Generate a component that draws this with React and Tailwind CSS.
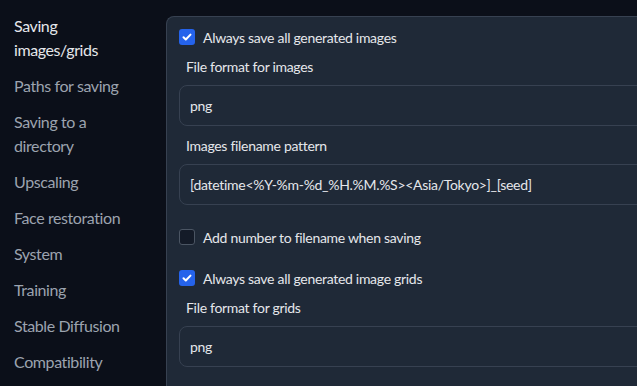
import React from 'react';

const navItems = [
  { label: 'Saving images/grids', active: true },
  { label: 'Paths for saving' },
  { label: 'Saving to a directory' },
  { label: 'Upscaling' },
  { label: 'Face restoration' },
  { label: 'System' },
  { label: 'Training' },
  { label: 'Stable Diffusion' },
  { label: 'Compatibility' },
];

function Checkbox({ checked, label, className = '' }) {
  return (
    <label className={`flex h-6 items-center ${className}`}>
      {checked ? (
        <span className="flex h-4 w-4 items-center justify-center rounded-[3px] bg-[#2563eb]">
          <svg viewBox="0 0 16 16" className="h-4 w-4" fill="none">
            <path
              d="M4.5 8.2l2.3 2.3 4.7-4.9"
              stroke="white"
              strokeWidth="2"
              strokeLinecap="round"
              strokeLinejoin="round"
            />
          </svg>
        </span>
      ) : (
        <span className="h-4 w-4 rounded-[3px] border border-[#4b5563] bg-[#141b28]" />
      )}
      <span className="ml-2 text-[14px] tracking-[-0.3px] text-[#e5e7eb]">{label}</span>
    </label>
  );
}

function Field({ label, value, className = '' }) {
  return (
    <div className={className}>
      <div className="h-5 pl-[7px] text-[14px] leading-5 tracking-[-0.3px] text-[#e5e7eb]">
        {label}
      </div>
      <div className="mt-2 flex h-[41px] w-[620px] items-center rounded-lg border border-[#374151] bg-[#1f2937] px-[10px] text-[14px] tracking-[-0.3px] text-[#e5e7eb]">
        {value}
      </div>
    </div>
  );
}

export default function App() {
  return (
    <div
      className="flex h-[386px] w-[637px] overflow-hidden bg-[#0b0f19]"
      style={{ fontFamily: 'Lato, "Noto Sans", sans-serif' }}
    >
      <nav className="w-[166px] shrink-0 pt-2 pl-[14px]">
        {navItems.map((item) => (
          <div
            key={item.label}
            className={`max-w-[125px] py-[6px] text-[16px] leading-6 tracking-[-0.4px] ${
              item.active ? 'text-[#e5e7eb]' : 'text-[#9ca3af]'
            }`}
          >
            {item.label}
          </div>
        ))}
      </nav>

      <main className="mt-4 min-w-[700px] rounded-tl-lg border-t border-l border-[#374151] bg-[#1f2937] pt-2 pl-3">
        <Checkbox checked label="Always save all generated images" />
        <Field label="File format for images" value="png" className="mt-2" />
        <Field
          label="Images filename pattern"
          value="[datetime<%Y-%m-%d_%H.%M.%S><Asia/Tokyo>]_[seed]"
          className="mt-[10px]"
        />
        <Checkbox label="Add number to filename when saving" className="mt-5" />
        <Checkbox checked label="Always save all generated image grids" className="mt-[17px]" />
        <Field label="File format for grids" value="png" className="mt-2" />
      </main>
    </div>
  );
}
